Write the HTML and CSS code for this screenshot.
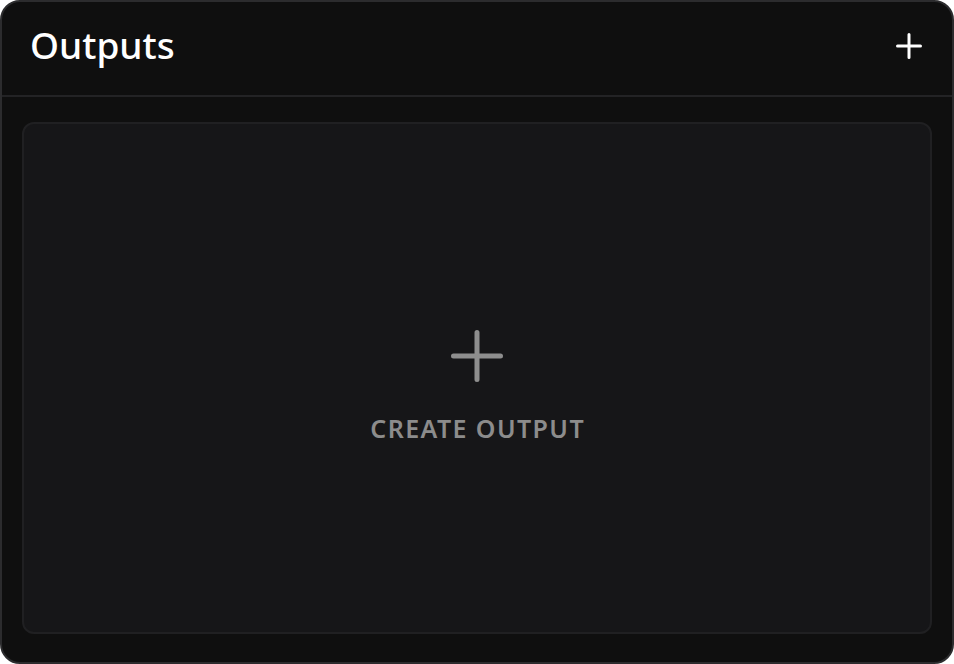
FILE: index.html
```html
<!DOCTYPE html>
<html>
<head>
<meta charset="utf-8">
<link rel="stylesheet" href="styles.css">
</head>
<body>
<div class="panel">
  <header class="panel-header">
    <h1 class="title">Outputs</h1>
    <button class="icon-btn" aria-label="Add output">
      <svg width="26" height="26" viewBox="0 0 26 26"><path d="M13 1.5v23M1.5 13h23" stroke="#fff" stroke-width="3" stroke-linecap="round" fill="none"/></svg>
    </button>
  </header>
  <div class="panel-body">
    <div class="empty-card">
      <svg class="big-plus" width="52" height="52" viewBox="0 0 52 52"><path d="M26 2.5v47M2.5 26h47" stroke="#8e8e8e" stroke-width="5" stroke-linecap="round" fill="none"/></svg>
      <div class="empty-label">CREATE OUTPUT</div>
    </div>
  </div>
</div>
</body>
</html>
```
FILE: styles.css
```css
* { box-sizing: border-box; }
html, body { margin: 0; padding: 0; background: #ffffff; }
body { font-family: "Noto Sans", "Open Sans", sans-serif; }
.panel {
  width: 954px;
  height: 664px;
  border: 2px solid #2c2c2e;
  border-radius: 20px;
  background: #0f0f0f;
  display: flex;
  flex-direction: column;
  overflow: hidden;
}
.panel-header {
  height: 95px;
  flex: none;
  border-bottom: 2px solid #232325;
  display: flex;
  align-items: center;
  justify-content: space-between;
  padding: 0 30px 0 28px;
}
.title {
  margin: 0;
  font-size: 37px;
  font-weight: 500;
  color: #ffffff;
  letter-spacing: 0;
  padding-bottom: 8px;
}
.icon-btn {
  background: none;
  border: 0;
  padding: 0;
  display: flex;
  margin-bottom: 6px;
}
.panel-body {
  flex: 1;
  display: flex;
  padding: 25px 20px 28px 20px;
}
.empty-card {
  flex: 1;
  background: #161618;
  border: 2px solid #202022;
  border-radius: 12px;
  display: flex;
  flex-direction: column;
  align-items: center;
  justify-content: center;
  gap: 29px;
  padding-top: 18px;
}
.empty-label {
  font-size: 25px;
  font-weight: 600;
  color: #8c8c8c;
  letter-spacing: 1.4px;
  margin-right: -1.4px;
}
```
